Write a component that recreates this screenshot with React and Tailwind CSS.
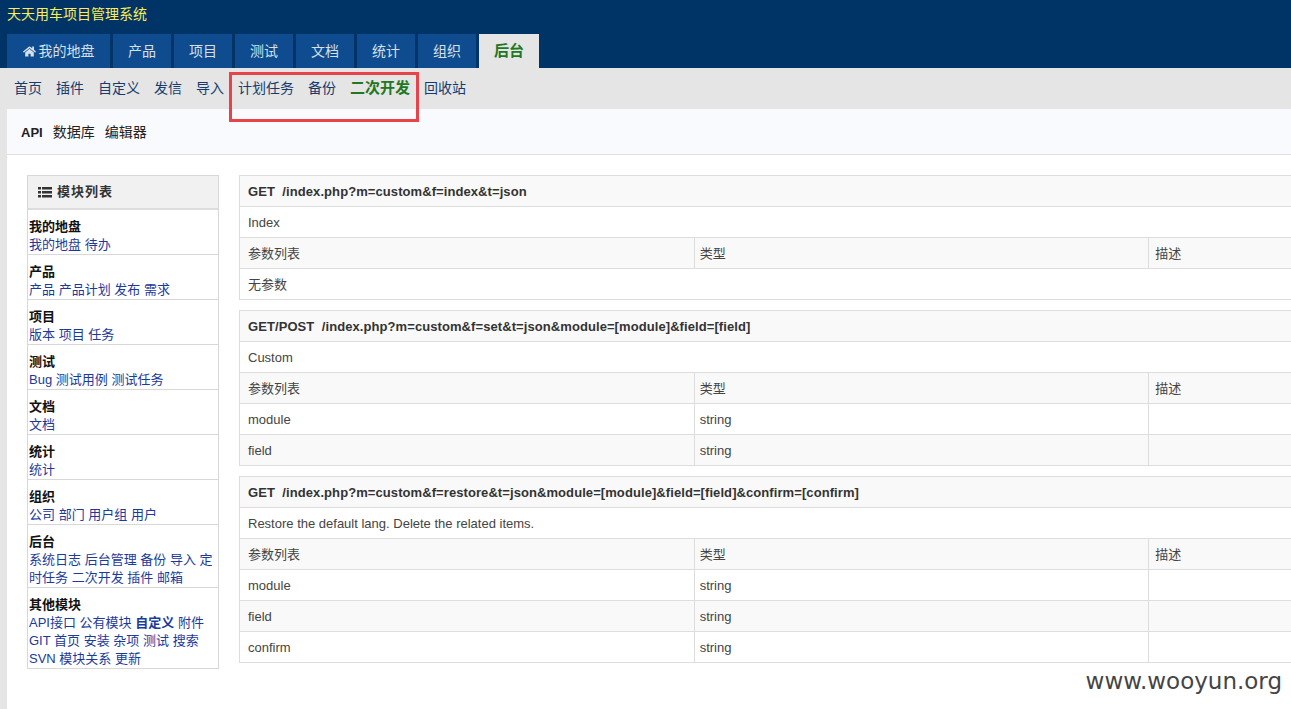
import React from "react";
import { FaHome } from "react-icons/fa";

const mainTabs = ["产品", "项目", "测试", "文档", "统计", "组织"];

const subNav = ["首页", "插件", "自定义", "发信", "导入", "计划任务", "备份", "二次开发", "回收站"];

const modules = [
  { title: "我的地盘", links: ["我的地盘", "待办"] },
  { title: "产品", links: ["产品", "产品计划", "发布", "需求"] },
  { title: "项目", links: ["版本", "项目", "任务"] },
  { title: "测试", links: ["Bug", "测试用例", "测试任务"] },
  { title: "文档", links: ["文档"] },
  { title: "统计", links: ["统计"] },
  { title: "组织", links: ["公司", "部门", "用户组", "用户"] },
  { title: "后台", links: ["系统日志", "后台管理", "备份", "导入", "定", "时任务", "二次开发", "插件", "邮箱"] },
  { title: "其他模块", links: ["API接口", "公有模块", "自定义", "附件", "GIT", "首页", "安装", "杂项", "测试", "搜索", "SVN", "模块关系", "更新"] },
];

const apis = [
  { method: "GET", url: "/index.php?m=custom&f=index&t=json", desc: "Index", params: [] },
  { method: "GET/POST", url: "/index.php?m=custom&f=set&t=json&module=[module]&field=[field]", desc: "Custom", params: ["module", "field"] },
  {
    method: "GET",
    url: "/index.php?m=custom&f=restore&t=json&module=[module]&field=[field]&confirm=[confirm]",
    desc: "Restore the default lang. Delete the related items.",
    params: ["module", "field", "confirm"],
  },
];

function ListIcon() {
  return (
    <svg width="14" height="11" viewBox="0 0 14 11" fill="#333">
      <rect x="0" y="0" width="3" height="2.5" />
      <rect x="4" y="0" width="10" height="2.5" />
      <rect x="0" y="4" width="3" height="2.5" />
      <rect x="4" y="4" width="10" height="2.5" />
      <rect x="0" y="8" width="3" height="2.5" />
      <rect x="4" y="8" width="10" height="2.5" />
    </svg>
  );
}

function ApiTable({ api }) {
  return (
    <table className="mb-2.5 w-[1365px] table-fixed border-collapse text-[13px] text-[#444]">
      <tbody>
        <tr className="h-[31px] bg-[#f9f9f9]">
          <th colSpan={3} className="border border-[#ddd] px-2 pt-0.5 text-left font-bold tracking-[0.08px] text-[#333]">
            {api.method}&nbsp;&nbsp;{api.url}
          </th>
        </tr>
        <tr className="h-[31px]">
          <td colSpan={3} className="border border-[#ddd] px-2 pt-0.5">{api.desc}</td>
        </tr>
        <tr className="h-[31px] bg-[#f9f9f9]">
          <td className="border border-[#ddd] px-2 pt-0.5">参数列表</td>
          <td className="border border-[#ddd] px-[5px] pt-0.5">类型</td>
          <td className="border border-[#ddd] px-1.5 pt-0.5">描述</td>
        </tr>
        {api.params.length === 0 && (
          <tr className="h-[31px]">
            <td colSpan={3} className="border border-[#ddd] px-2 pt-0.5">无参数</td>
          </tr>
        )}
        {api.params.map((p, i) => (
          <tr key={p} className={i % 2 === 1 ? "h-[31px] bg-[#f9f9f9]" : "h-[31px]"}>
            <td className="border border-[#ddd] px-2 pt-0.5">{p}</td>
            <td className="border border-[#ddd] px-[5px] pt-0.5">string</td>
            <td className="border border-[#ddd] px-1.5 pt-0.5"></td>
          </tr>
        ))}
      </tbody>
    </table>
  );
}

export default function App() {
  return (
    <div className="relative h-[709px] w-[1291px] overflow-hidden bg-[#e5e5e5] font-['Liberation_Sans','Noto_Sans_CJK_SC',sans-serif]">
      {/* top header */}
      <header className="h-[68px] bg-[#003366]">
        <div className="h-[34px] pl-[7px] pt-1.5 text-sm leading-4 text-[#ffee55]">天天用车项目管理系统</div>
        <nav className="flex gap-[3px] pl-[7px]">
          <a className="flex h-[34px] w-[103px] items-center justify-center gap-[3px] bg-[#0f4c8f] text-sm text-[#d5e0ec]">
            <FaHome className="size-[13px]" />
            我的地盘
          </a>
          {mainTabs.map((t) => (
            <a key={t} className="flex h-[34px] w-[58px] items-center justify-center bg-[#0f4c8f] text-sm text-[#d5e0ec]">
              {t}
            </a>
          ))}
          <a className="flex h-[34px] w-[60px] items-center justify-center bg-[#e5e5e5] text-[15px] font-bold text-[#227722]">后台</a>
        </nav>
      </header>

      {/* second level nav */}
      <nav className="flex h-[41px] items-center gap-3.5 pb-0.5 pl-3.5 text-sm text-[#143c6e]">
        {subNav.map((s) => (
          <a key={s} className={s === "二次开发" ? "text-[15px] font-bold text-[#227722]" : ""}>{s}</a>
        ))}
      </nav>

      {/* page body */}
      <main className="ml-[7px] h-[600px] rounded-tl-sm bg-white">
        <div className="flex h-[46px] items-baseline gap-2.5 border-b border-[#e0e0e0] bg-[#f9fafd] pl-3.5 pt-[13px] text-sm leading-5 text-[#222]">
          <b className="text-[13px]">API</b>
          <span>数据库</span>
          <span>编辑器</span>
        </div>
        <div className="flex items-start pl-5 pt-5">
          <aside className="w-[192px] shrink-0 border border-[#d8d8d8] text-[13px] leading-[18px]">
            <div className="flex h-[34px] items-center gap-[5px] border-b-2 border-[#ddd] bg-[#f1f1f1] pl-2.5 font-bold tracking-[1px] text-[#333]">
              <ListIcon />
              模块列表
            </div>
            {modules.map((m, i) => (
              <div key={m.title} className={`px-px pt-2 ${i < modules.length - 1 ? "border-b border-[#d8d8d8]" : ""}`}>
                <div className="font-bold text-[#111]">{m.title}</div>
                <div className="text-[#1a3a9c]">
                  {m.links.map((l) => (
                    <React.Fragment key={l}>
                      <a className={l === "自定义" ? "font-bold" : ""}>{l}</a>{" "}
                    </React.Fragment>
                  ))}
                </div>
              </div>
            ))}
          </aside>
          <div className="ml-5 shrink-0">
            {apis.map((a) => (
              <ApiTable key={a.url} api={a} />
            ))}
          </div>
        </div>
      </main>

      {/* watermark */}
      <div className="absolute bottom-4 right-[9px] font-['DejaVu_Sans',sans-serif] text-[23px] leading-none text-[#444]">www.wooyun.org</div>
      {/* red annotation box */}
      <div className="absolute left-[229px] top-[72px] h-[50px] w-[190px] border-[3px] border-[#e8424a]" />
    </div>
  );
}
